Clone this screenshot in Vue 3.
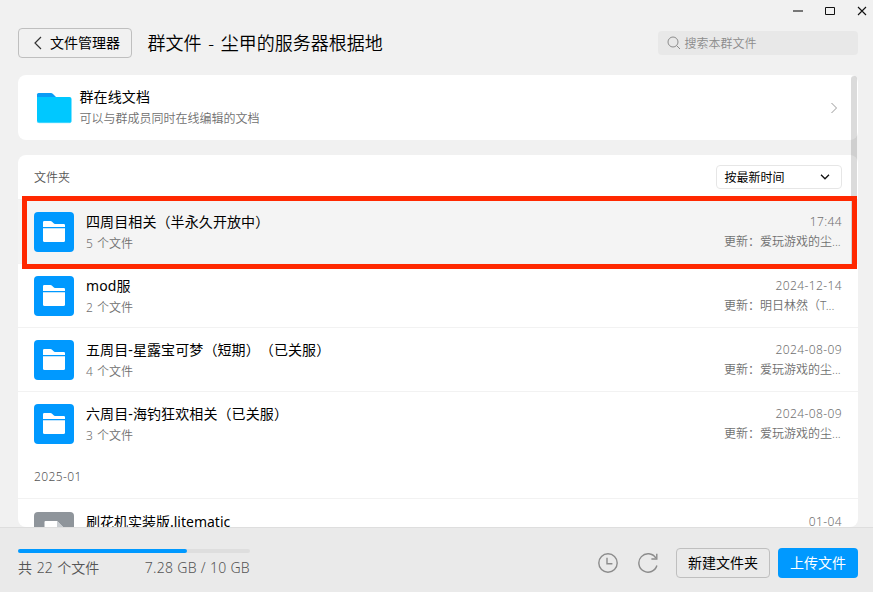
<script setup>
const folders = [
  { name: '四周目相关（半永久开放中）', count: 5, date: '17:44', by: '更新：爱玩游戏的尘...', marked: true },
  { name: 'mod服', count: 2, date: '2024-12-14', by: '更新：明日林然（T...' },
  { name: '五周目-星露宝可梦（短期）（已关服）', count: 4, date: '2024-08-09', by: '更新：爱玩游戏的尘...' },
  { name: '六周目-海钓狂欢相关（已关服）', count: 3, date: '2024-08-09', by: '更新：爱玩游戏的尘...' },
]
const used = 7.28
const total = 10
</script>

<template>
  <div class="window">
    <div class="controls">
      <svg width="12" height="12" viewBox="0 0 12 12"><path d="M1 6H11" stroke="#777" stroke-width="2" /></svg>
      <svg width="12" height="12" viewBox="0 0 12 12"><path d="M1.5 2.5H10.5V9.5H1.5Z" fill="none" stroke="#111" /></svg>
      <svg width="12" height="12" viewBox="0 0 12 12"><path d="M2 2L10 10M10 2L2 10" stroke="#111" stroke-width="1.1" /></svg>
    </div>

    <header class="head">
      <button class="back">
        <svg width="8" height="14" viewBox="0 0 8 14"><path d="M7 1L1 7L7 13" fill="none" stroke="#333" stroke-width="1.2" /></svg>
        <span>文件管理器</span>
      </button>
      <h1>群文件 - 尘甲的服务器根据地</h1>
      <div class="search">
        <svg width="14" height="14" viewBox="0 0 14 14"><circle cx="6" cy="6" r="5" fill="none" stroke="#8c8c8c" /><path d="M9.6 9.6L13 13" stroke="#8c8c8c" /></svg>
        <span>搜索本群文件</span>
      </div>
    </header>

    <main class="scroller">
      <section class="card docs">
        <svg width="36" height="32" viewBox="0 0 36 32">
          <path d="M1 2.5Q1 1 2.5 1H15Q16 1 17 2L20 5V12H1Z" fill="#0a9cf5" />
          <path d="M1 5H33.5Q35.5 5 35.5 7V29Q35.5 31 33.5 31H3Q1 31 1 29Z" fill="#00c8ff" />
          <path d="M1.4 29.5Q1.8 30.7 3 30.7H33.5Q34.8 30.7 35.2 29.5" fill="none" stroke="#5cdcff" stroke-width=".8" />
        </svg>
        <div class="info">
          <div class="name">群在线文档</div>
          <div class="sub">可以与群成员同时在线编辑的文档</div>
        </div>
        <svg class="go" width="8" height="12" viewBox="0 0 8 12"><path d="M1.5 1L6.5 6L1.5 11" fill="none" stroke="#999" /></svg>
      </section>

      <section class="card files">
        <div class="group">
          <span>文件夹</span>
          <div class="sort">
            <span>按最新时间</span>
            <svg width="10" height="6" viewBox="0 0 10 6"><path d="M1 .8L5 4.8L9 .8" fill="none" stroke="#111" stroke-width="1.3" /></svg>
          </div>
        </div>
        <div v-for="f in folders" :key="f.name" class="row" :class="{ marked: f.marked }">
          <div class="icon">
            <svg width="22" height="22" viewBox="0 0 22 22">
              <path d="M0 6V1.2Q0 0 1.2 0H7.4Q8.2 0 8.8 .6L10.6 2.3Q11.2 2.9 12 2.9H20.8Q22 2.9 22 4.1V6Z" fill="#fff" />
              <path d="M0 7.2H22V19.5Q22 21 20.5 21H1.5Q0 21 0 19.5Z" fill="#fff" />
            </svg>
          </div>
          <div class="info">
            <div class="name">{{ f.name }}</div>
            <div class="sub">{{ f.count }} 个文件</div>
          </div>
          <div class="meta">
            <div class="date">{{ f.date }}</div>
            <div class="by">{{ f.by }}</div>
          </div>
        </div>
        <div class="group"><span class="month">2025-01</span></div>
        <div class="row">
          <div class="icon gray">
            <svg width="20" height="22" viewBox="0 0 20 22"><path d="M.5 1Q.5 0 1.5 0H13L20 7V22H.5Z" fill="#fff" /><path d="M13 0L20 7H14.5Q13 7 13 5.5Z" fill="#c9cdd1" /></svg>
          </div>
          <div class="info"><div class="name">刷花机实装版.litematic</div></div>
          <div class="meta"><div class="date">01-04</div></div>
        </div>
      </section>
      <i class="thumb"></i>
      <i class="frame"></i>
    </main>

    <footer class="foot">
      <div class="usage">
        <div class="bar"><i :style="{ width: (used / total) * 100 + '%' }"></i></div>
        <div class="nums"><span class="count">共 22 个文件</span><span class="size">{{ used }} GB / {{ total }} GB</span></div>
      </div>
      <svg width="20" height="20" viewBox="0 0 20 20"><g fill="none" stroke="#8c8c8c" stroke-width="1.4"><circle cx="10" cy="10" r="9.2" /><path d="M9 4.8V10.8H14.4" /></g></svg>
      <svg class="refresh" width="20" height="20" viewBox="0 0 20 20"><g fill="none" stroke="#8c8c8c" stroke-width="1.4"><path d="M18.9 12.5A9.2 9.2 0 1 1 17.8 5" /><path d="M18.8 .8V6H13.4" /></g></svg>
      <button class="create"><span>新建文件夹</span></button>
      <button class="upload"><span>上传文件</span></button>
    </footer>
  </div>
</template>

<style>
body { margin: 0; overflow: hidden; }
</style>

<style scoped>
* { box-sizing: border-box; }
.window {
  width: 873px; height: 592px; display: flex; flex-direction: column; background: #f1f1f1; color: #000;
  font-family: "Noto Sans", "Noto Sans CJK SC", sans-serif; font-size: 14px; font-weight: 350; overflow: hidden; white-space: nowrap;
  text-spacing-trim: space-all;
}
svg { display: block; flex: none; }
button { font: inherit; padding: 0; border-radius: 4px; display: flex; align-items: center; justify-content: center; }
button span { padding-bottom: 2px; }
.controls { height: 22px; flex: none; display: flex; justify-content: flex-end; gap: 20px; padding: 5px 5px 0 0; }
.head { height: 53px; flex: none; display: flex; align-items: flex-start; padding: 6px 15px 0 18px; }
.back { width: 114px; height: 30px; border: 1px solid #bfbfbf; background: transparent; gap: 8px; padding-right: 2px; padding-left: 6px; color: #000; }
h1 { font-size: 18px; font-weight: inherit; line-height: 30px; margin: 0 0 0 15.5px; flex: 1; word-spacing: 2px; }
.search { width: 200px; height: 24px; margin-top: 3px; border-radius: 4px; background: #e8e8e8; display: flex; align-items: center; gap: 4px; padding-left: 8.5px; font-size: 12px; color: #8c8c8c; }
.scroller { height: 452px; flex: none; position: relative; overflow: hidden; padding: 0 15px 0 18px; display: flex; flex-direction: column; gap: 15px; }
.card { background: #fff; border-radius: 8px; overflow: hidden; flex: none; }
.docs { height: 65px; display: flex; align-items: center; padding: 0 20px 0 18px; }
.docs .info { margin-left: 7.5px; }
.docs .name { margin-top: -1px; }
.docs .sub { padding-top: 1px; }
.info { flex: 1; }
.name { font-size: 14px; line-height: 22px; letter-spacing: .1px; }
.row .name, .back span, .create span, .upload span, .docs .name, .sort { font-weight: 400; }
.sub { font-size: 12px; line-height: 20px; color: #707070; }
.row .sub { padding-top: 1px; word-spacing: 1px; }
.files { height: 372px; }
.group { height: 45px; border-bottom: 1px solid #f2f2f2; padding: 0 16px; display: flex; align-items: center; justify-content: space-between; font-size: 12px; color: #555; }
.month { letter-spacing: .4px; }
.sort { width: 126px; height: 24px; border: 1px solid #e6e6e6; border-radius: 4px; display: flex; align-items: center; justify-content: space-between; padding: 0 11px 0 7.5px; color: #000; }
.row { height: 64px; border-bottom: 1px solid #f2f2f2; padding: 11px 16px 0; display: flex; gap: 12px; }
.row:nth-child(5) { border-bottom: 0; height: 62px; }
.row:last-child { padding-top: 12px; }
.row:last-child .name { letter-spacing: 0; }
.marked { background: #f4f4f4; }
.icon { width: 40px; height: 40px; margin-top: 1px; border-radius: 4px; background: #0099ff; display: flex; align-items: center; justify-content: center; }
.gray { background: #8f959b; }
.meta { color: #707070; font-size: 12px; line-height: 20px; width: 118px; padding-top: 1px; }
.date { text-align: right; letter-spacing: .4px; }
.thumb { position: absolute; top: 1px; right: 16px; width: 6px; height: 193px; border-radius: 3px; background: rgba(0, 0, 0, .14); }
.frame { position: absolute; left: 22px; top: 121px; width: 835px; height: 73px; border: 5px solid #ff2800; }
.foot { flex: 1; background: #eaeaea; border-top: 1px solid #dedede; display: flex; align-items: center; padding: 6px 15px 0 18px; }
.usage { width: 232px; margin-right: 348px; }
.bar { height: 4px; border-radius: 2px; background: #dedede; }
.bar i { display: block; height: 4px; border-radius: 2px; background: #0099ff; }
.nums { display: flex; justify-content: space-between; line-height: 20px; margin-top: 5px; color: #555; }
.count { word-spacing: 1px; }
.size { letter-spacing: .3px; }
.refresh { margin: 0 18px 0 20px; }
.create { width: 94px; height: 30px; border: 1px solid #bfbfbf; background: transparent; margin-right: 8px; color: #000; }
.upload { width: 80px; height: 30px; border: 0; background: #0099ff; color: #fff; }
</style>
